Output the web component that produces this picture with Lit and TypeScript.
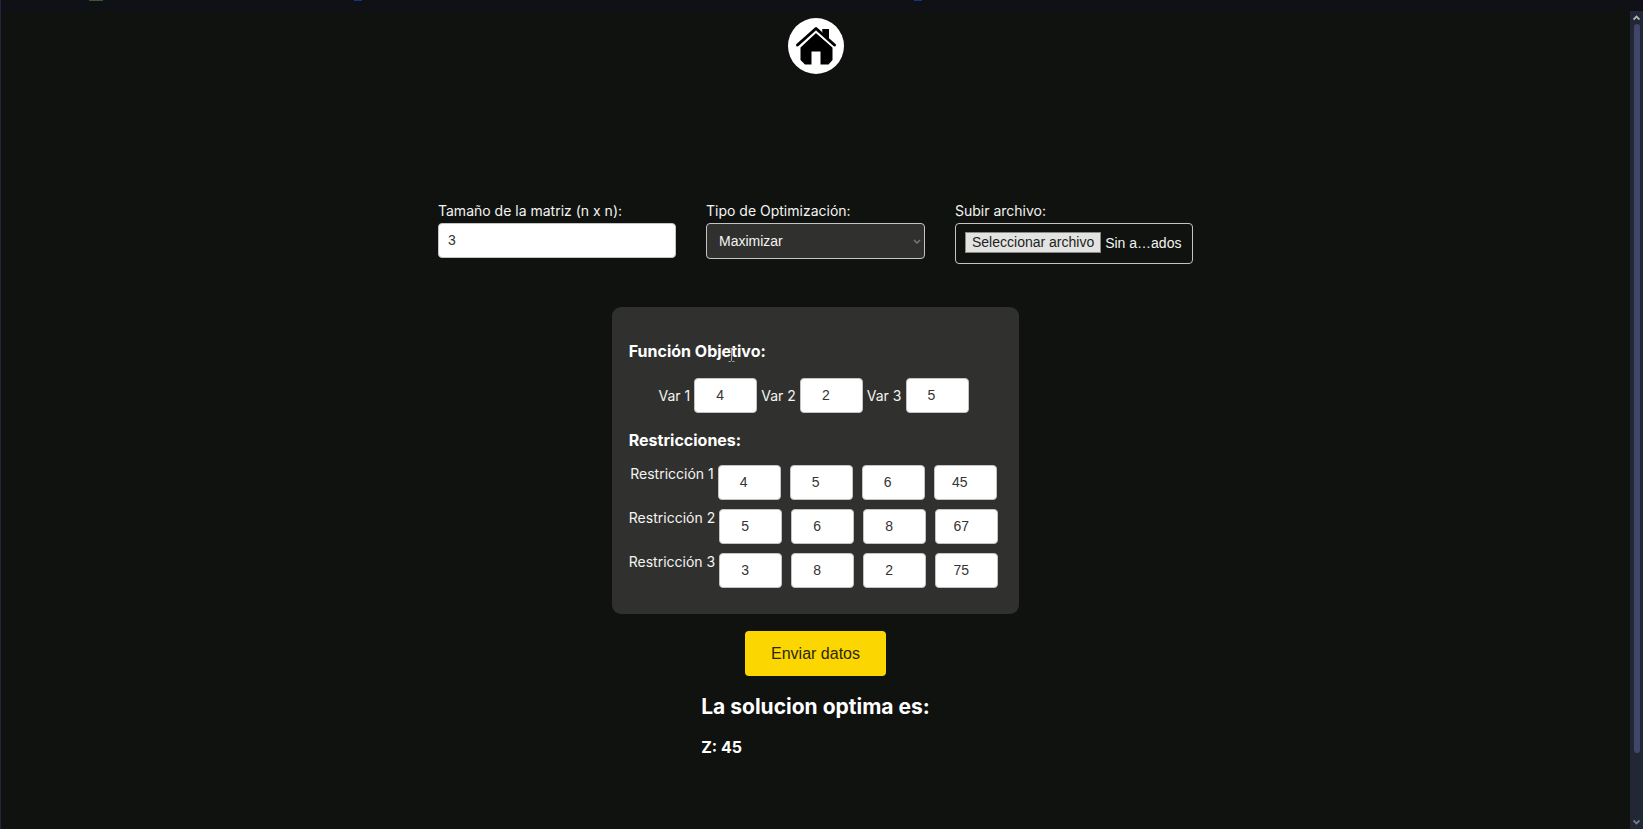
import { LitElement, html, css } from "lit";
import { customElement, state } from "lit/decorators.js";

@customElement("app-root")
export class AppRoot extends LitElement {
  static styles = css`
    :host {
      display: block;
      background: #10120f;
      color: #f4f4f2;
      font: 400 14px/18px Inter, "Liberation Sans", sans-serif;
    }
    * {
      box-sizing: border-box;
    }
    .window {
      display: grid;
      grid-template-rows: 11px 1fr;
      min-height: 100vh;
      border-left: 1px solid #2a2042;
    }
    .edge {
      display: flex;
      background: #101116;
    }
    .mark {
      width: 14px;
      height: 1px;
      margin-left: 88px;
      background: #35582f;
    }
    .mark.blue {
      width: 8px;
      margin-left: 251px;
      background: #0a3a80;
    }
    .mark.far {
      margin-left: 552px;
    }
    .view {
      display: grid;
      grid-template-columns: 1fr 13px;
    }
    main {
      display: flex;
      flex-direction: column;
      align-items: center;
      padding: 7px 16px 16px;
    }
    .home {
      display: block;
      width: 56px;
      height: 56px;
    }
    .home svg {
      display: block;
      width: 100%;
      height: 100%;
    }
    form {
      display: flex;
      flex-direction: column;
      align-items: center;
      margin-top: 128px;
    }
    .options {
      display: flex;
      flex-wrap: wrap;
      justify-content: center;
      align-items: flex-start;
      gap: 30px;
    }
    .field {
      display: flex;
      flex-direction: column;
      gap: 3px;
      width: 238px;
    }
    .field.kind {
      width: 219px;
    }
    input,
    select,
    .file {
      font: 400 14px/18px "Liberation Sans", Arial, sans-serif;
      border: 1px solid #c4c4c4;
      border-radius: 4px;
    }
    .number {
      width: 100%;
      height: 35px;
      padding: 0 9px 2px;
      background: #fff;
      color: #333;
      margin: 0;
    }
    .cell {
      width: 63px;
      padding: 0 6px 2px 10px;
      text-align: center;
    }
    .select {
      display: grid;
      align-items: center;
    }
    .select > * {
      grid-area: 1 / 1;
    }
    .chevron {
      justify-self: end;
      width: 8px;
      height: 5px;
      margin-right: 4px;
      pointer-events: none;
    }
    select {
      appearance: none;
      width: 100%;
      height: 36px;
      padding: 0 12px;
      background: #30312f;
      color: #f4f4f2;
    }
    .file {
      display: flex;
      align-items: center;
      gap: 4px;
      height: 41px;
      padding: 0 9px 2px;
      white-space: nowrap;
      cursor: pointer;
    }
    .file input {
      position: absolute;
      width: 1px;
      height: 1px;
      opacity: 0;
    }
    .pick {
      padding: 0 6px;
      height: 21px;
      border: 1px solid #8a8a8a;
      background: #e3e4e2;
      color: #222;
    }
    .card {
      margin-top: 43px;
      padding: 34px 17px 26px;
      border-radius: 9px;
      background: #30312f;
    }
    h2,
    h3 {
      margin: 0;
      color: #fff;
      font-weight: 700;
    }
    h3 {
      font-size: 16px;
      line-height: 20px;
    }
    .title {
      position: relative;
      width: fit-content;
    }
    .beam {
      position: absolute;
      left: 98px;
      top: 6px;
      width: 9px;
      height: 16px;
    }
    .vars {
      display: flex;
      justify-content: center;
      align-items: center;
      gap: 4px;
      padding-right: 4px;
      margin: 17px 0;
    }
    .rows {
      display: grid;
      gap: 9px;
      margin-top: 15px;
    }
    .row {
      display: flex;
      justify-content: center;
      gap: 9px;
      padding-right: 4px;
    }
    .row .name {
      margin-right: -5px;
    }
    .send {
      margin-top: 17px;
      height: 45px;
      padding: 0 26px;
      border: 0;
      border-radius: 4px;
      background: #fbd600;
      color: #2a2710;
      font: 400 16px/20px "Liberation Sans", Arial, sans-serif;
      cursor: pointer;
    }
    .result {
      display: grid;
      gap: 17px;
      margin-top: 18px;
    }
    h2 {
      font-size: 21px;
      line-height: 26px;
    }
    .scroll {
      display: flex;
      flex-direction: column;
      align-items: center;
      padding: 4px 0;
      background: #222735;
    }
    .scroll svg {
      width: 7px;
      height: 6px;
    }
    .track {
      flex: 1;
      width: 6px;
      margin: 3px 0;
    }
    .thumb {
      height: 92%;
      border-radius: 3px;
      background: #41456a;
    }
  `;

  @state() private objective = [4, 2, 5];
  @state() private restrictions = [
    [4, 5, 6, 45],
    [5, 6, 8, 67],
    [3, 8, 2, 75],
  ];

  render() {
    return html`
      <div class="window">
        <div class="edge">
          <span class="mark"></span><span class="mark blue"></span><span class="mark blue far"></span>
        </div>
        <div class="view">
          <main>
            <a class="home" href="#" aria-label="Inicio">
              <svg viewBox="0 0 56 56">
                <circle cx="28" cy="28" r="28" fill="#fff" />
                <path d="M28 15 44.500 29.500V42l-4 4.500H32.500V33.500h-9v13H17L12.500 42V29.500z" fill="#000" />
                <path d="M34.500 11h6.500v11l-6.500-6z" fill="#000" />
                <path d="M10 27.500 28 11.500l18.500 16" fill="none" stroke="#fff" stroke-width="5" />
                <path d="M34.500 11h6.500v11l-6.500-6z" fill="#000" />
                <path d="M9.500 27 28 10.500 46.500 27" fill="none" stroke="#000" stroke-width="3" stroke-linecap="round" stroke-linejoin="round" />
              </svg>
            </a>
            <form @submit=${(e: Event) => e.preventDefault()}>
              <div class="options">
                <div class="field">
                  <label for="size">Tamaño de la matriz (n x n):</label>
                  <input class="number" id="size" type="number" value="3" />
                </div>
                <div class="field kind">
                  <label for="kind">Tipo de Optimización:</label>
                  <div class="select">
                    <select id="kind">
                      <option>Maximizar</option>
                      <option>Minimizar</option>
                    </select>
                    <svg class="chevron" viewBox="0 0 8 5">
                      <path d="M1 1l3 3 3-3" fill="none" stroke="#777875" stroke-width="1.500" />
                    </svg>
                  </div>
                </div>
                <div class="field">
                  <label for="upload">Subir archivo:</label>
                  <label class="file">
                    <input id="upload" type="file" />
                    <span class="pick">Seleccionar archivo</span>
                    <span>Sin a…ados</span>
                  </label>
                </div>
              </div>
              <section class="card">
                <h3 class="title">
                  Función Objetivo:
                  <svg class="beam" viewBox="0 0 9 16">
                    <path d="M1.500 1.500h2l1 1 1-1h2M4.500 2.500v11M1.500 14.500h2l1-1 1 1h2" fill="none" stroke="#a5a5a2" />
                  </svg>
                </h3>
                <div class="vars">
                  ${this.objective.map(
                    (v, i) => html`
                      <label for="var${i}">Var ${i + 1}</label>
                      <input class="number cell" id="var${i}" type="number" .value=${String(v)} />
                    `,
                  )}
                </div>
                <h3>Restricciones:</h3>
                <div class="rows">
                  ${this.restrictions.map(
                    (row, r) => html`
                      <div class="row">
                        <label class="name" for="r${r}c0">Restricción ${r + 1}</label>
                        ${row.map(
                          (v, c) => html`<input
                            class="number cell"
                            id="r${r}c${c}"
                            type="number"
                            aria-label="Restricción ${r + 1}, valor ${c + 1}"
                            .value=${String(v)}
                          />`,
                        )}
                      </div>
                    `,
                  )}
                </div>
              </section>
              <button class="send" type="submit">Enviar datos</button>
            </form>
            <section class="result">
              <h2>La solucion optima es:</h2>
              <h3>Z: 45</h3>
            </section>
          </main>
          <div class="scroll" aria-hidden="true">
            <svg viewBox="0 0 7 6"><path d="M.5 4.500l3-3 3 3" fill="none" stroke="#b4b4b8" stroke-width="1.800" /></svg>
            <div class="track"><div class="thumb"></div></div>
            <svg viewBox="0 0 7 6"><path d="M.5 1.500l3 3 3-3" fill="none" stroke="#777c88" stroke-width="1.800" /></svg>
          </div>
        </div>
      </div>
    `;
  }
}
